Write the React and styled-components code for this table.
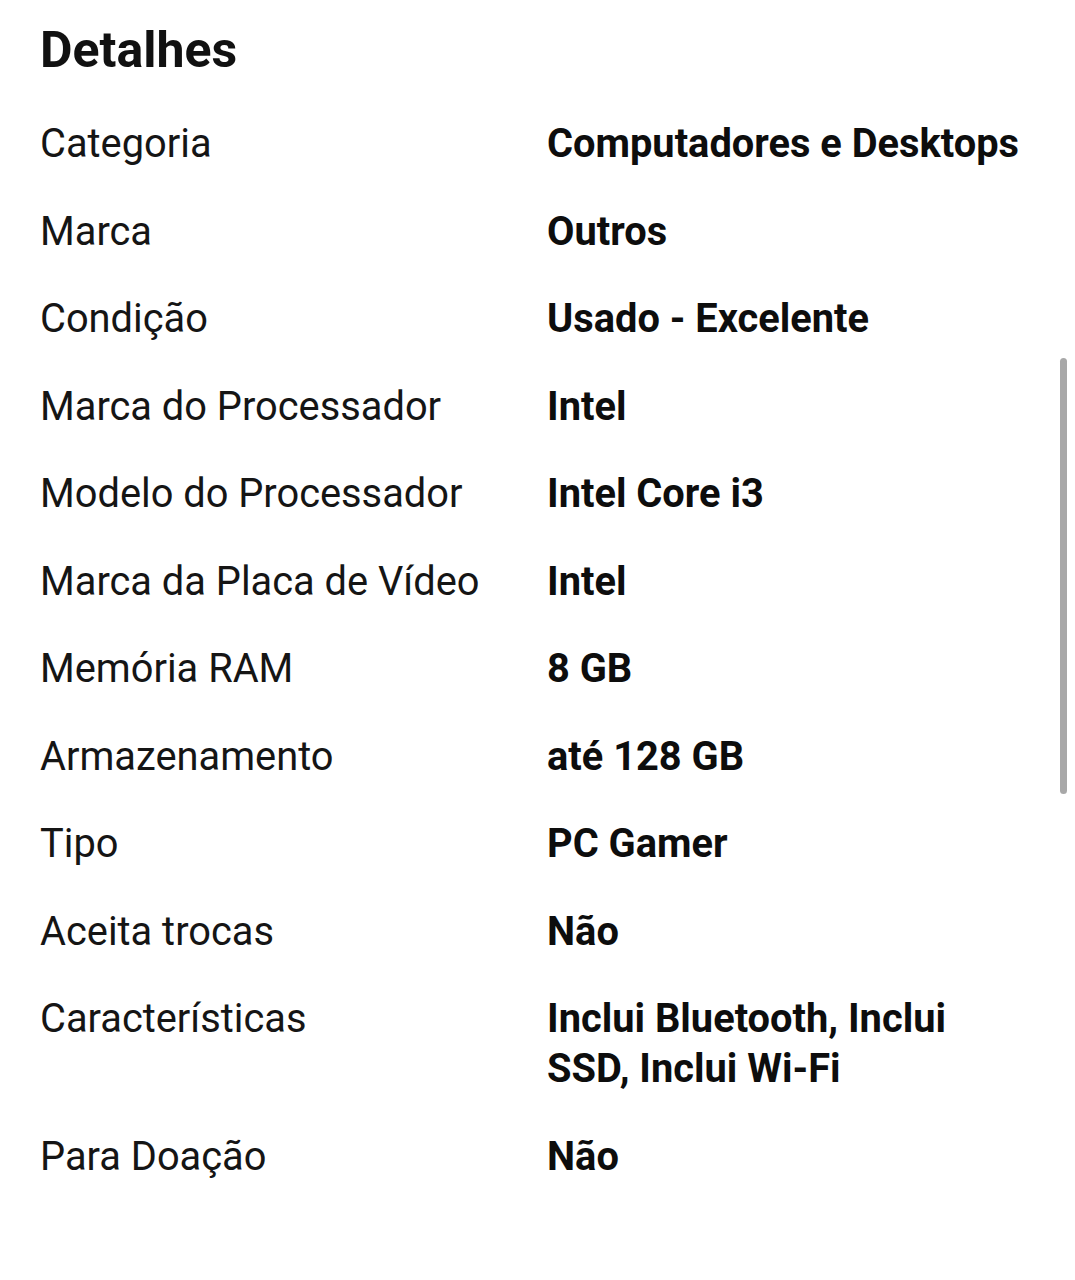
import React from "react";
import styled, { createGlobalStyle } from "styled-components";

const GlobalStyle = createGlobalStyle`
  * { box-sizing: border-box; margin: 0; padding: 0; }
  html, body { background: #ffffff; }
  body { font-family: Roboto, "Noto Sans", sans-serif; color: #111111; }
`;

const Page = styled.div`
  position: relative;
  width: 1075px;
  min-height: 1280px;
  padding: 22px 0 0 40px;
`;

const Title = styled.h1`
  font-size: 50px;
  font-weight: 700;
  line-height: 56px;
  color: #111;
  margin-bottom: 41px;
`;

const Table = styled.dl`
  display: grid;
  grid-template-columns: 507px 482px;
  row-gap: 37.5px;
  font-size: 39.8px;
  line-height: 50px;
`;

const Label = styled.dt`
  font-weight: 400;
  color: #151515;
`;

const Value = styled.dd`
  font-weight: 700;
  color: #0d0d0d;
`;

const Scrollbar = styled.div`
  position: absolute;
  top: 358px;
  right: 8px;
  width: 7px;
  height: 436px;
  border-radius: 4px;
  background: #a8a8a8;
`;

const rows = [
  ["Categoria", "Computadores e Desktops"],
  ["Marca", "Outros"],
  ["Condição", "Usado - Excelente"],
  ["Marca do Processador", "Intel"],
  ["Modelo do Processador", "Intel Core i3"],
  ["Marca da Placa de Vídeo", "Intel"],
  ["Memória RAM", "8 GB"],
  ["Armazenamento", "até 128 GB"],
  ["Tipo", "PC Gamer"],
  ["Aceita trocas", "Não"],
  ["Características", "Inclui Bluetooth, Inclui SSD, Inclui Wi-Fi"],
  ["Para Doação", "Não"],
];

export default function App() {
  return (
    <>
      <GlobalStyle />
      <Page>
        <Title>Detalhes</Title>
        <Table>
          {rows.map(([k, v]) => (
            <React.Fragment key={k}>
              <Label>{k}</Label>
              <Value>{v}</Value>
            </React.Fragment>
          ))}
        </Table>
        <Scrollbar />
      </Page>
    </>
  );
}
